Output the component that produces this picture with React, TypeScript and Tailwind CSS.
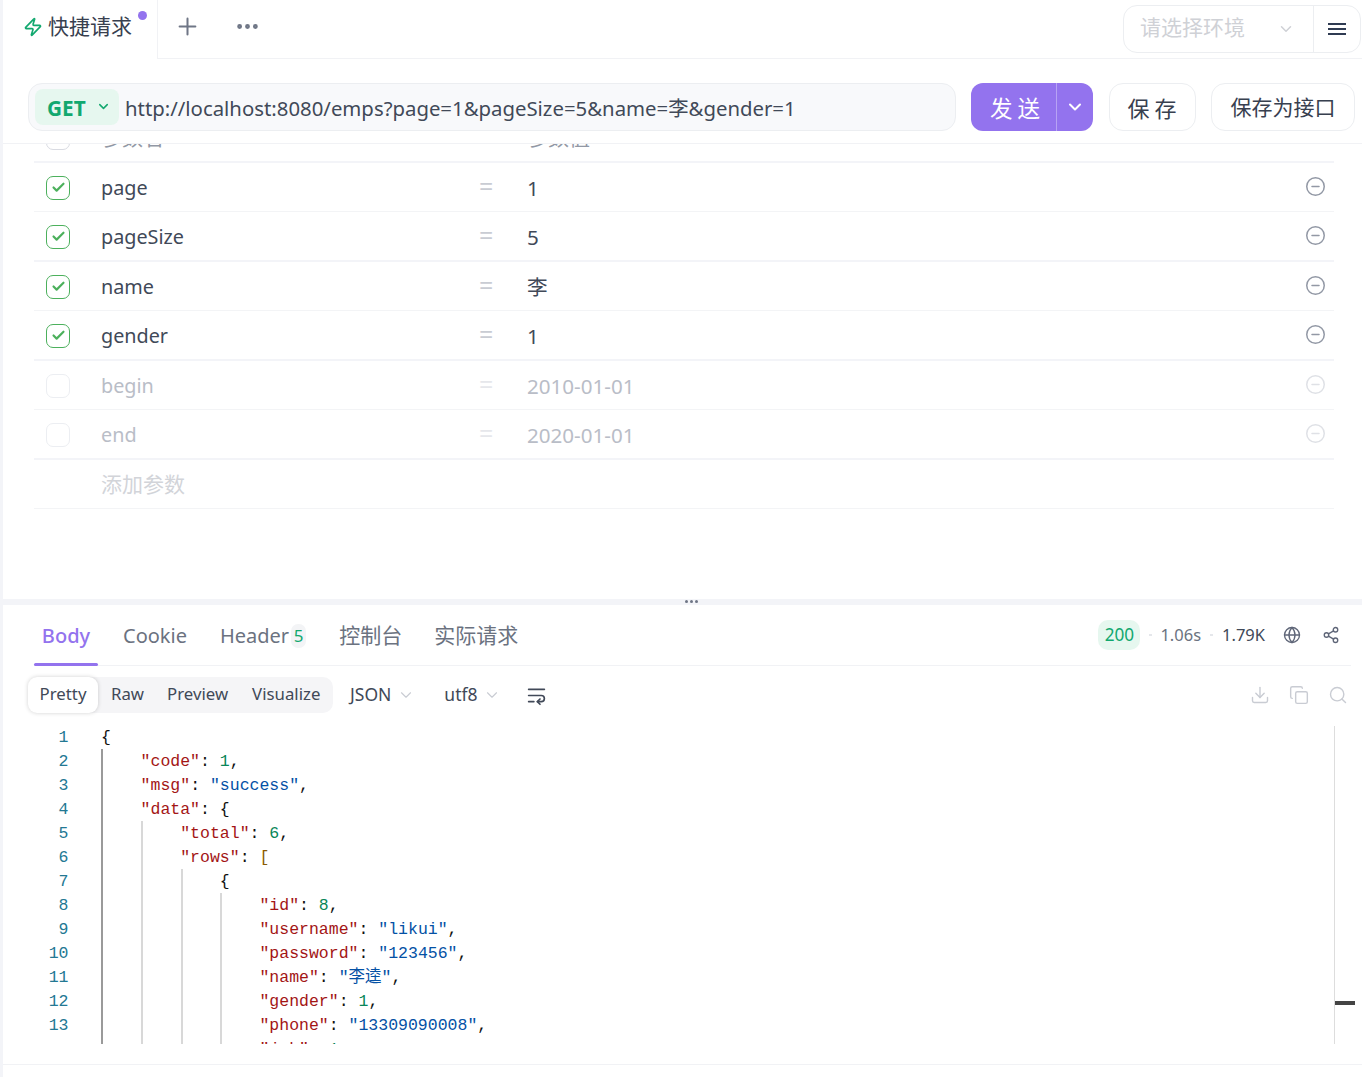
import React from "react";
import { Zap, Plus, Ellipsis, ChevronDown, Check, CircleMinus, Globe, Share2, Download, Copy, Search, WrapText } from "lucide-react";

const FONT = "font-['Noto_Sans','Noto_Sans_CJK_SC',sans-serif]";

type P = { name: string; value: string; on: boolean; thick?: boolean };
const params: P[] = [
  { name: "page", value: "1", on: true },
  { name: "pageSize", value: "5", on: true, thick: true },
  { name: "name", value: "李", on: true },
  { name: "gender", value: "1", on: true, thick: true },
  { name: "begin", value: "2010-01-01", on: false },
  { name: "end", value: "2020-01-01", on: false, thick: true },
];

function Row({ p }: { p: P }) {
  return (
    <div className={`flex h-[49.5px] items-center pt-[2px] ${p.thick ? "border-b-2 border-[#f3f4f8]" : "border-b border-[#f3f4f6]"}`}>
      <div className="w-[67px] pl-[12px]">
        <div className={`flex h-[24px] w-[24px] items-center justify-center rounded-[7px] border ${p.on ? "border-[#4cb05c]" : "border-[#eceef2]"}`}>
          {p.on && <Check size={15} strokeWidth={3.4} className="text-[#4cb05c]" />}
        </div>
      </div>
      <div className={`w-[378px] pt-[1px] text-[19.8px] ${p.on ? "text-[#414958]" : "text-[#b9bdc7]"}`}>{p.name}</div>
      <div className={`w-[48px] -translate-y-[1px] text-[25px] leading-none ${p.on ? "text-[#c9ccd3]" : "text-[#e6e7eb]"}`}>=</div>
      <div className={`flex-1 pt-[0.6px] text-[20.6px] ${p.on ? "text-[#414958]" : "text-[#b9bdc7]"}`}>{p.value}</div>
      <CircleMinus size={21} strokeWidth={1.7} className={`mr-[8px] mb-[2px] ${p.on ? "text-[#9298a5]" : "text-[#dfe1e6]"}`} />
    </div>
  );
}

type Tok = [string, string];
const K = "text-[#a31515]";
const S = "text-[#0451a5]";
const N = "text-[#098658]";
const D = "text-[#111111]";
const B = "text-[#8a5a00]";
const kv = (k: string, v: string, c: string): Tok[] => [[`"${k}"`, K], [": ", D], [v, c], [",", D]];
const code: { ind: number; t: Tok[] }[] = [
  { ind: 0, t: [["{", D]] },
  { ind: 1, t: kv("code", "1", N) },
  { ind: 1, t: kv("msg", '"success"', S) },
  { ind: 1, t: [['"data"', K], [": {", D]] },
  { ind: 2, t: kv("total", "6", N) },
  { ind: 2, t: [['"rows"', K], [": ", D], ["[", B]] },
  { ind: 3, t: [["{", D]] },
  { ind: 4, t: kv("id", "8", N) },
  { ind: 4, t: kv("username", '"likui"', S) },
  { ind: 4, t: kv("password", '"123456"', S) },
  { ind: 4, t: kv("name", '"李逵"', S) },
  { ind: 4, t: kv("gender", "1", N) },
  { ind: 4, t: kv("phone", '"13309090008"', S) },
];

const guides = [
  { x: 101, top: 23, c: "bg-[#9a9a9a]" },
  { x: 141, top: 95, c: "bg-[#d8d8d8]" },
  { x: 181, top: 143, c: "bg-[#d8d8d8]" },
  { x: 220, top: 167, c: "bg-[#d8d8d8]" },
];

export default function App() {
  return (
    <div className={`${FONT} h-[1077px] w-[1362px] overflow-hidden border-l-[3px] border-[#f3f4f8] bg-white`}>
      {/* top bar */}
      <div className="flex h-[59px] items-stretch">
        <div className="relative flex w-[155px] items-center border-r border-[#f1f2f5] pl-[20px] pb-[6px]">
          <Zap size={20} strokeWidth={2} className="text-[#12a86f]" />
          <span className="ml-[5px] text-[21px] text-[#38404f]">快捷请求</span>
          <span className="absolute left-[135px] top-[11px] h-[9px] w-[9px] rounded-full bg-[#9373ee]" />
        </div>
        <div className="flex flex-1 items-center border-b border-[#f1f2f5] pr-[1px] pb-[6px]">
          <Plus size={27} strokeWidth={1.8} className="ml-[16px] text-[#6f7686]" />
          <Ellipsis size={27} strokeWidth={2.3} className="ml-[33px] text-[#6f7686]" />
          <div className="ml-auto mt-[6px] flex h-[48px] w-[238px] items-stretch rounded-[14px] border border-[#eceef1]">
            <div className="flex flex-1 items-center pl-[16px]">
              <span className="-translate-y-[1px] text-[21px] text-[#cfd1d6]">请选择环境</span>
              <ChevronDown size={18} strokeWidth={2} className="ml-[32px] text-[#cfd1d6]" />
            </div>
            <div className="flex w-[47px] items-center justify-center border-l border-[#eceef1]">
              <div className="flex w-[18px] flex-col gap-[3px]">
                <span className="h-[2px] bg-[#2f3b52]" />
                <span className="h-[2px] bg-[#2f3b52]" />
                <span className="h-[2px] bg-[#2f3b52]" />
              </div>
            </div>
          </div>
        </div>
      </div>

      {/* request bar */}
      <div className="flex h-[85px] items-start border-b border-[#f1f2f5] pt-[24px] pl-[25px]">
        <div className="flex h-[48px] w-[928px] items-center rounded-[14px] border border-[#eceef1] bg-[#f8f9fb] pl-[6px]">
          <div className="flex h-[36px] w-[84px] items-center rounded-[8px] bg-[#e6f7ef] pl-[12px]">
            <span className="translate-y-[2px] text-[20.8px] font-bold text-[#12a86f]">GET</span>
            <ChevronDown size={15} strokeWidth={2.4} className="ml-[10px] -translate-y-[1px] text-[#12a86f]" />
          </div>
          <span className="ml-[6px] translate-y-[0.5px] text-[20.35px] text-[#414958]">http://localhost:8080/emps?page=1&amp;pageSize=5&amp;name=李&amp;gender=1</span>
        </div>
        <div className="ml-[15px] flex h-[48px] w-[122px] items-stretch rounded-[12px] bg-[#9373ee] text-white">
          <div className="flex w-[86px] items-center justify-center border-r border-[#b7a3f4] pt-[3px] pl-[8px] text-[22.5px] tracking-[5px]">发送</div>
          <div className="flex flex-1 items-center justify-center"><ChevronDown size={20} strokeWidth={2.4} /></div>
        </div>
        <div className="ml-[16px] flex h-[48px] w-[87px] items-center justify-center rounded-[14px] border border-[#eceef1] pt-[2px] pl-[4px] text-[22px] tracking-[5px] text-[#38404f]">保存</div>
        <div className="ml-[15px] flex h-[48px] w-[144px] items-center justify-center rounded-[14px] border border-[#eceef1] pt-[2px] text-[21px] text-[#38404f]">保存为接口</div>
      </div>

      {/* params */}
      <div className="h-[455px] overflow-hidden pl-[31px] pr-[25px]">
        <div className="-mt-[31px] w-[1300px]">
          <div className="flex h-[49.5px] items-center border-b-2 border-[#f3f4f8] pt-[2px]">
            <div className="w-[67px] pl-[12px]"><div className="h-[24px] w-[24px] rounded-[7px] border border-[#d9dbe2]" /></div>
            <div className="w-[426px] text-[21px] text-[#9298a5]">参数名</div>
            <div className="text-[21px] text-[#9298a5]">参数值</div>
          </div>
          {params.map((p) => <Row key={p.name} p={p} />)}
          <div className="flex h-[49.5px] items-center border-b border-[#f3f4f6] pl-[67px] pt-[2px] text-[21px] text-[#d2d4d9]">添加参数</div>
        </div>
      </div>

      {/* splitter */}
      <div className="flex h-[6px] items-center justify-center gap-[2px] bg-[#f3f4f8] pb-[1px] pl-[17px]">
        <span className="h-[3px] w-[3px] rounded-full bg-[#6f7686]" />
        <span className="h-[3px] w-[3px] rounded-full bg-[#6f7686]" />
        <span className="h-[3px] w-[3px] rounded-full bg-[#6f7686]" />
      </div>

      {/* response tabs */}
      <div className="ml-[31px] mr-[11px] flex h-[61px] items-center border-b border-[#f1f2f5] pt-[2px] text-[20px] text-[#6b7280]">
        <div className="relative flex h-full w-[64px] items-center justify-center font-medium text-[#9373ee]">
          Body
          <span className="absolute inset-x-0 bottom-[-1px] h-[3px] rounded-full bg-[#9373ee]" />
        </div>
        <span className="ml-[25px]">Cookie</span>
        <span className="ml-[33px]">Header</span>
        <span className="ml-[2px] flex h-[24px] w-[15px] items-center justify-center rounded-[7px] bg-[#f3f4f6] text-[17px] text-[#12a86f]">5</span>
        <span className="ml-[33px] text-[21px]">控制台</span>
        <span className="ml-[32px] text-[21px]">实际请求</span>
        <div className="ml-auto -translate-y-[1px] flex items-center text-[16.5px]">
          <span className="flex h-[30px] w-[42px] items-center justify-center rounded-[10px] bg-[#e6f7ef] text-[17.2px] text-[#12a86f]">200</span>
          <span className="mx-[8.5px] h-[2px] w-[3px] bg-[#e5e7eb]" />
          <span className="text-[#6b7280]">1.06s</span>
          <span className="mx-[9px] h-[2px] w-[3px] bg-[#e5e7eb]" />
          <span className="text-[#414958]">1.79K</span>
          <Globe size={18} strokeWidth={1.8} className="ml-[18px] text-[#5f6678]" />
          <Share2 size={18} strokeWidth={1.8} className="ml-[21px] mr-[11px] text-[#5f6678]" />
        </div>
      </div>

      {/* format toolbar */}
      <div className="ml-[25px] mr-[14px] flex h-[60px] items-center pb-[2px] text-[16.8px] text-[#414958]">
        <div className="flex h-[36px] w-[305px] items-center rounded-[10px] bg-[#f5f5f7]">
          <span className="flex h-[36px] w-[70px] items-center justify-center rounded-[9px] bg-white pb-[2px] shadow-[0_0_4px_rgba(0,0,0,0.18)]">Pretty</span>
          <span className="ml-[13px] -translate-y-[1px]">Raw</span>
          <span className="ml-[23px] -translate-y-[1px]">Preview</span>
          <span className="ml-[24px] -translate-y-[1px]">Visualize</span>
        </div>
        <span className="ml-[17px] -translate-y-[1px] text-[17.5px]">JSON</span>
        <ChevronDown size={18} strokeWidth={1.5} className="ml-[6px] text-[#c9ccd3]" />
        <span className="ml-[29px] -translate-y-[1px] text-[17.5px]">utf8</span>
        <ChevronDown size={18} strokeWidth={1.5} className="ml-[5px] text-[#c9ccd3]" />
        <WrapText size={21} strokeWidth={1.9} className="ml-[25px] text-[#414958]" />
        <div className="ml-auto flex items-center gap-[19px] text-[#c9ccd3]">
          <Download size={20} strokeWidth={1.7} />
          <Copy size={20} strokeWidth={1.7} />
          <Search size={20} strokeWidth={1.7} />
        </div>
      </div>

      {/* code editor */}
      <div className="relative h-[318px] w-[1332px] overflow-hidden font-['Liberation_Mono','Noto_Sans_CJK_SC',monospace] text-[16.5px] leading-[24px]">
        {guides.map((g) => (
          <span key={g.x} className={`absolute bottom-0 w-[1.5px] ${g.c}`} style={{ left: g.x - 3, top: g.top }} />
        ))}
        {code.map((l, i) => (
          <div key={i} className="flex h-[24px] whitespace-pre">
            <span className="w-[65.5px] text-right text-[#237893]">{i + 1}</span>
            <span className="pl-[32.5px]">
              <span>{"    ".repeat(l.ind)}</span>
              {l.t.map(([s, c], j) => <span key={j} className={c}>{s}</span>)}
            </span>
          </div>
        ))}
        {/* only the tops of line 14's quotes show above the editor's lower edge */}
        <div className="flex h-[24px] whitespace-pre">
          <span className="w-[65.5px]" />
          <span className="pl-[32.5px]">
            <span>{"    ".repeat(4)}</span>
            <span className={K}>"job"</span><span className={D}>: </span><span className={N}>1</span><span className={D}>,</span>
          </span>
        </div>
        <div className="absolute right-0 top-0 bottom-0 w-[1.5px] bg-[#dddddd]" />
      </div>
      <div className="relative ml-[1332px] h-0">
        <span className="absolute -top-[43px] left-0 h-[4px] w-[20px] bg-[#444444]" />
      </div>
      <div className="mt-[20px] border-t border-[#f1f2f5]" />
    </div>
  );
}
